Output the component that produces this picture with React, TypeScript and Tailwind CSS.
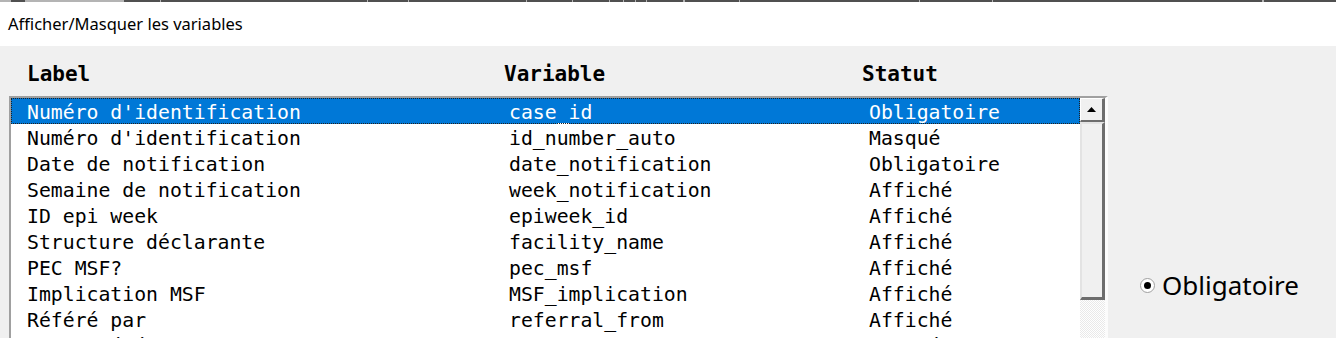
import React from 'react'

const rows = [
  { label: "Numéro d'identification", variable: 'case_id', statut: 'Obligatoire' },
  { label: "Numéro d'identification", variable: 'id_number_auto', statut: 'Masqué' },
  { label: 'Date de notification', variable: 'date_notification', statut: 'Obligatoire' },
  { label: 'Semaine de notification', variable: 'week_notification', statut: 'Affiché' },
  { label: 'ID epi week', variable: 'epiweek_id', statut: 'Affiché' },
  { label: 'Structure déclarante', variable: 'facility_name', statut: 'Affiché' },
  { label: 'PEC MSF?', variable: 'pec_msf', statut: 'Affiché' },
  { label: 'Implication MSF', variable: 'MSF_implication', statut: 'Affiché' },
  { label: 'Référé par', variable: 'referral_from', statut: 'Affiché' },
  { label: 'Autre référence', variable: 'referral_other', statut: 'Masqué' },
]

// cut-off marks of the window above
const ticks = [12, 16, 110, 40, 1, 80, 1, 28, 1, 120, 1, 44, 2, 130, 1, 50, 1, 40, 1, 15, 1, 12, 1, 12, 1, 40, 2, 60, 1, 200, 1, 80, 1, 300, 2, 80]

export default function App() {
  return (
    <div className="w-[1336px] h-[338px] overflow-hidden bg-[#f0f0f0] flex flex-col">
      {/* ── Title bar ── */}
      <div className="h-[46px] bg-white flex flex-col shrink-0">
        <div className="h-[2px] bg-[#b4b4b4] flex">
          {ticks.map((w, i) => (
            <div key={i} style={{ width: w }} className={i % 2 === 1 ? 'bg-[#505050]' : ''} />
          ))}
        </div>
        <div className="pl-[8px] pt-[12px] text-[16.5px] leading-[20px] text-black font-['Noto_Sans',sans-serif]">
          Afficher/Masquer les variables
        </div>
      </div>

      <div className="flex flex-1 min-h-0">
        {/* ── List column ── */}
        <div className="w-[1108px] shrink-0 flex flex-col font-['DejaVu_Sans_Mono',monospace]">
          <div className="mt-[15px] h-[26px] flex items-center text-[21px] leading-[26px] font-bold text-black">
            <span className="w-[477px] pl-[27px] box-content shrink-0">Label</span>
            <span className="w-[358px] shrink-0">Variable</span>
            <span>Statut</span>
          </div>

          <div className="mt-[9px] ml-[9px] flex-1 flex border-t-2 border-l-2 border-[#a0a0a0] border-r-[3px] border-r-[#fcfcfc] bg-white">
            <div className="w-[1069px] shrink-0 flex flex-col text-[19.8px] leading-[23px]">
              {rows.map((r, i) => (
                <div
                  key={i}
                  className={
                    'h-[26px] shrink-0 flex pl-[16px] pt-[3px] whitespace-pre ' +
                    (i === 0
                      ? 'bg-[#0078d7] text-white outline-1 outline-dotted outline-[#202020] -outline-offset-1'
                      : 'text-black')
                  }
                >
                  <span className="w-[482px] shrink-0">{r.label}</span>
                  <span className="w-[360px] shrink-0">{r.variable}</span>
                  <span>{r.statut}</span>
                </div>
              ))}
            </div>

            {/* ── Scrollbar ── */}
            <div className="w-[25px] shrink-0 flex flex-col bg-[image:repeating-conic-gradient(#ffffff_0%_25%,#e9e9e9_0%_50%)] bg-[length:2px_2px]">
              <div className="h-[24px] shrink-0 bg-[#f0f0f0] border-t border-l border-[#ffffff] border-r-[3px] border-b-[2px] border-r-[#6d6d6d] border-b-[#6d6d6d] flex items-center justify-center">
                <svg width="9" height="5" viewBox="0 0 9 5">
                  <path d="M4.5 0 L9 5 L0 5 Z" fill="#000" />
                </svg>
              </div>
              <div className="h-[178px] shrink-0 bg-[#f0f0f0] border-t-2 border-l-2 border-[#e3e3e3] border-r-[3px] border-b-[3px] border-r-[#6d6d6d] border-b-[#6d6d6d]" />
            </div>
          </div>
        </div>

        {/* ── Right panel ── */}
        <div className="flex-1 flex flex-col pl-[32px] pt-[224px]">
          <label className="flex items-center gap-[7px] h-[30px]">
            <span className="w-[15px] h-[15px] rounded-full bg-white border border-[#a0a0a0] flex items-center justify-center shrink-0">
              <span className="w-[7px] h-[7px] rounded-full bg-black" />
            </span>
            <span className="text-[26px] leading-[30px] text-black font-['Noto_Sans',sans-serif]">Obligatoire</span>
          </label>
        </div>
      </div>
    </div>
  )
}
